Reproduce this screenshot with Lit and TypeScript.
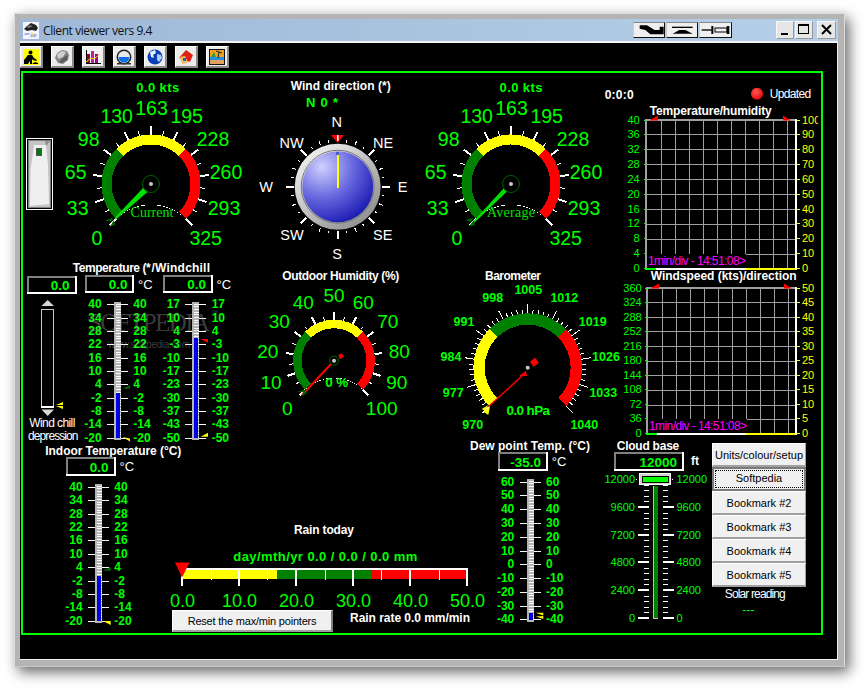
import { LitElement, html, svg, css } from "lit";
import { customElement } from "lit/decorators.js";

const rad = (d: number) => (d * Math.PI) / 180;
const pt = (cx: number, cy: number, r: number, d: number): [number, number] => [
  cx + r * Math.sin(rad(d)),
  cy - r * Math.cos(rad(d)),
];
const band = (cx: number, cy: number, r1: number, r2: number, a: number, b: number) => {
  const [x1, y1] = pt(cx, cy, r2, a);
  const [x2, y2] = pt(cx, cy, r2, b);
  const [x3, y3] = pt(cx, cy, r1, b);
  const [x4, y4] = pt(cx, cy, r1, a);
  return `M${x1} ${y1}A${r2} ${r2} 0 0 1 ${x2} ${y2}L${x3} ${y3}A${r1} ${r1} 0 0 0 ${x4} ${y4}Z`;
};
const T = (
  x: number,
  y: number,
  s: string,
  cls: string,
  anchor = "middle",
  len?: number,
) =>
  len
    ? svg`<text x=${x} y=${y} class=${cls} text-anchor=${anchor} dominant-baseline="central" textLength=${len}>${s}</text>`
    : svg`<text x=${x} y=${y} class=${cls} text-anchor=${anchor} dominant-baseline="central">${s}</text>`;
const tick = (cx: number, cy: number, r1: number, r2: number, d: number, w: number) => {
  const [a, b] = pt(cx, cy, r1, d);
  const [c, e] = pt(cx, cy, r2, d);
  return svg`<line x1=${a} y1=${b} x2=${c} y2=${e} stroke="#fff" stroke-width=${w} />`;
};
const poly = (p: number[][], fill: string) =>
  svg`<polygon points=${p.map((q) => q.join(",")).join(" ")} fill=${fill} />`;

interface GaugeCfg {
  cx: number;
  cy: number;
  rIn: number;
  rOut: number;
  colors: string[];
  majorW: number;
  majorLen: number;
  minors: number;
  minorLen: number;
  border: boolean;
  labels: [string, number, number][];
  cls: string;
}

const gauge = (g: GaugeCfg) => {
  const ticks = [];
  for (let i = 0; i <= 10; i++) {
    const d = -135 + i * 27;
    ticks.push(tick(g.cx, g.cy, g.rOut, g.rOut + g.majorLen, d, g.majorW));
    if (i < 10)
      for (let m = 1; m <= g.minors; m++) {
        const dm = d + (m * 27) / (g.minors + 1);
        ticks.push(tick(g.cx, g.cy, g.rOut, g.rOut + g.minorLen, dm, 1));
      }
  }
  return svg`<g shape-rendering="crispEdges">
    ${ticks}
    ${g.colors.map(
      (c, i) =>
        svg`<path d=${band(g.cx, g.cy, g.rIn, g.rOut, -135 + i * 90, -45 + i * 90)} fill=${c} />`,
    )}
    ${g.border
      ? svg`<path d=${band(g.cx, g.cy, g.rOut, g.rOut + 1.5, -135, 135)} fill="#fff" />`
      : ""}
  </g>
  ${g.labels.map(([s, x, y]) => T(x, y, s, g.cls))}`;
};

const speedLabels = (dx: number): [string, number, number][] => [
  ["0", 97 + dx, 238],
  ["33", 77.7 + dx, 208],
  ["65", 75.7 + dx, 172],
  ["98", 88.7 + dx, 139],
  ["130", 116.7 + dx, 116],
  ["163", 151.5 + dx, 108],
  ["195", 186.7 + dx, 116],
  ["228", 213 + dx, 139],
  ["260", 226 + dx, 172],
  ["293", 224 + dx, 208],
  ["325", 205.7 + dx, 238],
];
const TRI = ["#008000", "#ffff00", "#ff0000"];
const speedGauge = (cx: number) => ({
  cx,
  cy: 184,
  rIn: 39.5,
  rOut: 49.5,
  colors: TRI,
  majorW: 2,
  majorLen: 9,
  minors: 1,
  minorLen: 5,
  border: true,
  labels: speedLabels(cx - 151),
  cls: "big",
});

const hub = (cx: number, cy: number, r: number) => svg`
  <circle cx=${cx} cy=${cy} r=${r} fill="#000" stroke="#006400" stroke-width="1" />
  <circle cx=${cx} cy=${cy} r="2" fill="#c8c8c8" />`;

const compass = () => {
  const cx = 337.7,
    cy = 186.7;
  const ts = [];
  for (let i = 0; i < 32; i++) {
    const d = i * 11.25;
    if (i === 0) continue;
    if (i % 4 === 0) ts.push(tick(cx, cy, 44, 52, d, 2));
    else ts.push(tick(cx, cy, 45, i % 2 ? 47.5 : 49, d, 1));
  }
  const labels: [string, number, number][] = [
    ["N", 336.7, 122],
    ["NE", 383, 143],
    ["E", 402.7, 187],
    ["SE", 382.7, 235],
    ["S", 337, 254],
    ["SW", 292, 235],
    ["W", 266, 187],
    ["NW", 291.7, 143],
  ];
  return svg`
    <g shape-rendering="crispEdges">${ts}</g>
    <circle cx=${cx} cy=${cy} r="43" fill="url(#ring)" />
    <circle cx=${cx} cy=${cy} r="36.5" fill="none" stroke="#777" stroke-width="1" />
    <circle cx=${cx} cy=${cy} r="35.5" fill="url(#sphere)" />
    <rect x="336" y="152" width="3" height="3" fill="#4a5fd0" />
    <rect x="337" y="155" width="2" height="33" fill="#ffff00" />
    ${poly([[331, 135], [344, 135], [337.7, 143]], "#ff0000")}
    <rect x="337" y="135" width="1.6" height="6" fill="#fff" />
    ${labels.map(([s, x, y]) => T(x, y, s, "cmp"))}`;
};

interface ThermCfg {
  x: number;
  top: number;
  bottom: number;
  fillTop: number;
  fillBottom: number;
  firstY: number;
  pitch: number;
  left: string[];
  right: string[];
  leftEnd: number;
  rightStart: number;
}
const therm = (t: ThermCfg) => {
  const hatch = [];
  for (let y = t.top + 2; y < t.bottom - 1; y += 2.67) hatch.push(y);
  return svg`
    <g shape-rendering="crispEdges">
      <rect x=${t.x} y=${t.top} width="7" height=${t.bottom - t.top} fill="#b4b4b4" />
      ${hatch.map(
        (y) =>
          svg`<line x1=${t.x + 2} x2=${t.x + 7} y1=${y} y2=${y} stroke="#fff" stroke-width="1" />`,
      )}
      <rect x=${t.x + 1.5} y=${t.fillTop} width="4.5" height=${t.fillBottom - t.fillTop} fill="#0000e6" />
      ${t.left.map((_, i) => {
        const y = Math.round(t.firstY + i * t.pitch);
        return svg`<line x1=${t.x - 7} x2=${t.x} y1=${y} y2=${y} stroke="#fff" stroke-width="1" />
          <line x1=${t.x + 7} x2=${t.x + 14} y1=${y} y2=${y} stroke="#fff" stroke-width="1" />`;
      })}
    </g>
    ${t.left.map((s, i) => T(t.leftEnd, t.firstY + i * t.pitch, s, "th", "end"))}
    ${t.right.map((s, i) => T(t.rightStart, t.firstY + i * t.pitch, s, "th", "start"))}`;
};

const valueBox = (
  x1: number,
  y1: number,
  x2: number,
  y2: number,
  val: string,
  end: number,
  unit?: [string, number],
) => svg`
  <g shape-rendering="crispEdges" fill="none" stroke-width="2">
    <path d="M${x1 + 1} ${y2}V${y1 + 1}H${x2}" stroke="#808080" />
    <path d="M${x1} ${y2 - 1}H${x2 - 1}V${y1}" stroke="#fff" />
  </g>
  ${T(end, (y1 + y2) / 2 + 0.5, val, "val", "end")}
  ${unit ? T(unit[1], (y1 + y2) / 2, unit[0], "unit", "start") : ""}`;

const chart = (
  x0: number,
  top: number,
  bottom: number,
  rowCount: number,
  left: string[],
  right: string[],
  labelEnd: number,
  rightStart: number,
) => {
  const pitch = (bottom - top) / rowCount;
  const vs = Array.from({ length: 10 }, (_, i) => Math.round(x0 + 2 + (i + 1) * 14));
  const hs = Array.from({ length: rowCount - 1 }, (_, i) => Math.round(top + (i + 1) * pitch));
  const labelPitch = (bottom - top - 1) / (left.length - 1);
  return svg`
    <g shape-rendering="crispEdges">
      ${vs.map((x) => svg`<line x1=${x} x2=${x} y1=${top} y2=${bottom} stroke="#a0a0a0" />`)}
      ${hs.map((y) => svg`<line x1=${x0} x2="796" y1=${y} y2=${y} stroke="#a0a0a0" />`)}
      <rect x=${x0 + 2} y=${bottom - 15} width="99" height="15" fill="#000" />
      <rect x=${x0} y=${top - 1} width="151" height="2" fill="#a0a0a0" />
      <rect x=${x0} y=${top - 1} width="2" height=${bottom - top + 1} fill="#a0a0a0" />
      <rect x="795" y=${top - 1} width="2" height=${bottom - top + 2} fill="#fff" />
      <rect x=${x0} y=${bottom - 1} width="151" height="2" fill="#fff" />
      <rect x=${x0} y=${bottom - 1} width="11" height="2" fill="#00ff00" />
      <rect x="746" y=${bottom - 1} width="49" height="2" fill="#ffff00" />
      ${left.map((_, i) => {
        const y = Math.round(top + i * labelPitch);
        return svg`<rect x=${x0 - 1} y=${y} width="2" height="1" fill="#00ff00" />
          <rect x="797" y=${y} width="3" height="1" fill="#ffff00" />`;
      })}
    </g>
    ${poly([[x0 + 4, top + 1], [x0 + 13, top + 1], [x0 + 13, top - 4]], "#ff0000")}
    ${poly([[x0 + 138, top - 4], [x0 + 138, top + 1], [x0 + 146, top + 1]], "#ff0000")}
    ${T(x0 + 3, bottom - 8.5, "1min/div - 14:51:08>", "mag", "start", 98)}
    ${left.map((s, i) => T(labelEnd, top + i * labelPitch, s, "ax", "end"))}
    ${right.map((s, i) => T(rightStart, top + i * labelPitch, s, "ax yel", "start"))}`;
};

const rainBar = () => {
  const major = [182, 239, 296, 353, 410, 467];
  const minor = [211, 267, 325, 381, 439];
  return svg`
    <g shape-rendering="crispEdges">
      <rect x="183" y="570" width="94" height="9" fill="#ffff00" />
      <rect x="277" y="570" width="95" height="9" fill="#008000" />
      <rect x="372" y="570" width="95" height="9" fill="#ff0000" />
      <rect x="182" y="568" width="286" height="2" fill="#fff" />
      ${major.map((x) => svg`<rect x=${x - 1} y="568" width="2" height="18" fill="#fff" />`)}
      ${minor.map((x) => svg`<rect x=${x} y="568" width="1" height="12" fill="#fff" />`)}
    </g>
    ${poly([[175, 562.5], [189.5, 562.5], [182, 577.5]], "#ff0000")}
    ${["0.0", "10.0", "20.0", "30.0", "40.0", "50.0"].map((s, i) =>
      T(major[i] + 0.5, 600.5, s, "rain"),
    )}`;
};

const cloudScale = () => {
  const majors = [479, 507, 535, 562, 590, 618];
  const labels = ["12000", "9600", "7200", "4800", "2400", "0"];
  const minors: number[] = [];
  for (let i = 0; i < 5; i++)
    for (let m = 1; m < 5; m++) minors.push(Math.round(majors[i] + (m * (majors[i + 1] - majors[i])) / 5));
  minors.push(490);
  return svg`
    <g shape-rendering="crispEdges">
      ${majors.slice(1).map(
        (y) => svg`<rect x="638" y=${y - 1} width="11" height="2" fill="#fff" />
          <rect x="663" y=${y - 1} width="11" height="2" fill="#fff" />`,
      )}
      ${minors.map(
        (y) => svg`<rect x="644" y=${y} width="5" height="1" fill="#fff" />
          <rect x="663" y=${y} width="5" height="1" fill="#fff" />`,
      )}
      <rect x="636" y="479" width="1" height="1" fill="#fff" />
      <rect x="672" y="479" width="1" height="1" fill="#fff" />
      <rect x="653" y="486" width="5" height="133" fill="#c0c0c0" />
      <rect x="654" y="486" width="3.5" height="132" fill="#008000" />
      <rect x="639.5" y="473.5" width="31" height="11" fill="#d0d0d0" stroke="#fff" />
      <rect x="642" y="476" width="26" height="6.5" fill="#00ff00" stroke="#000" />
    </g>
    ${labels.map((s, i) => T(635, majors[i], s, "ax", "end"))}
    ${labels.map((s, i) => T(676.5, majors[i], s, "ax", "start"))}`;
};

const panel = () => svg`
  <svg class="canvas" width="818" height="589" viewBox="20 71 818 589" xmlns="http://www.w3.org/2000/svg">
    <defs>
      <radialGradient id="sphere" cx="0.28" cy="0.22" r="0.95">
        <stop offset="0" stop-color="#d0d0ff" />
        <stop offset="0.45" stop-color="#6a6ae0" />
        <stop offset="1" stop-color="#0808a8" />
      </radialGradient>
      <linearGradient id="ring" x1="0.15" y1="0.1" x2="0.85" y2="0.9">
        <stop offset="0" stop-color="#eeeeee" />
        <stop offset="1" stop-color="#909090" />
      </linearGradient>
      <radialGradient id="led" cx="0.4" cy="0.35" r="0.7">
        <stop offset="0" stop-color="#ff5a5a" />
        <stop offset="1" stop-color="#e00000" />
      </radialGradient>
      <clipPath id="clip1"><rect x="620" y="110" width="198" height="170" /></clipPath>
    </defs>
    <rect x="22" y="72" width="800" height="562" fill="none" stroke="#00ff00" stroke-width="2" shape-rendering="crispEdges" />

    ${T(157.7, 87, "0.0 kts", "gb", "middle", 43)}
    ${gauge(speedGauge(151))}
    ${poly([[143.5, 187.5], [148, 191.5], [116, 219.5], [114.5, 218]], "#00e000")}
    ${poly([[105, 221], [113, 217.5], [112, 221]], "#006400")}
    ${poly([[110, 226.5], [114, 220], [115, 225]], "#006400")}
    ${hub(151, 184, 8.5)}
    ${T(152, 212, "Current", "ser", "middle", 43)}

    <g shape-rendering="crispEdges">
      <rect x="26.5" y="138.5" width="26" height="71" fill="none" stroke="#fff" />
      <rect x="28" y="140" width="23" height="68" fill="#808080" />
      <rect x="29" y="141" width="21" height="66" fill="#c4c4c4" />
    </g>
    ${poly([[34, 145], [46, 145], [48, 165], [49, 204], [30, 206], [30.5, 170]], "#efefef")}
    ${poly([[45, 141], [50, 141], [46, 146]], "#8c8c8c")}
    <rect x="36" y="147.5" width="6" height="8" fill="#555" shape-rendering="crispEdges" />
    <rect x="37" y="149" width="4" height="6" fill="#007a00" shape-rendering="crispEdges" />

    ${T(340.7, 86, "Wind direction (*)", "hd", "middle", 100)}
    ${T(322, 102, "N 0 *", "gb", "middle", 32)}
    ${compass()}

    ${T(521, 87, "0.0 kts", "gb", "middle", 43)}
    ${gauge(speedGauge(511))}
    ${poly([[504, 188], [507, 191.5], [471, 226], [470, 225]], "#00e000")}
    ${poly([[465, 220], [473, 218], [471, 222]], "#006400")}
    ${poly([[469, 226.5], [474, 220], [475, 225]], "#006400")}
    ${hub(511, 184, 8.5)}
    ${T(511, 212, "Average", "ser", "middle", 48)}

    ${T(604.7, 95, "0:0:0", "hd", "start", 29)}
    <circle cx="757" cy="93.7" r="6" fill="url(#led)" />
    ${T(769.7, 94, "Updated", "thin", "start", 41.5)}

    ${T(649.7, 111, "Temperature/humidity", "hd", "start", 122)}
    <g clip-path="url(#clip1)">
      ${chart(645, 119.5, 269, 10,
        ["40", "36", "32", "28", "24", "20", "16", "12", "8", "4", "0"],
        ["100", "90", "80", "70", "60", "50", "40", "30", "20", "10", "0"],
        639.7, 802)}
    </g>
    ${T(650.7, 276, "Windspeed (kts)/direction", "hd", "start", 146)}
    ${chart(646, 287.5, 434, 10,
      ["360", "324", "288", "252", "216", "180", "144", "108", "72", "36", "0"],
      ["50", "45", "40", "35", "30", "25", "20", "15", "10", "5", "0"],
      641.7, 802)}

    ${T(72.7, 267.7, "Temperature (*", "hd", "start", 78)}
    ${T(151.5, 267.7, "/Windchill", "hd", "start", 58.5)}
    ${valueBox(27, 276, 77, 294, "0.0", 69.5)}
    ${valueBox(85, 275, 134, 293, "0.0", 127.5, ["°C", 138])}
    ${valueBox(163, 275, 213, 293, "0.0", 206, ["°C", 216.5])}

    <g shape-rendering="crispEdges">
      <rect x="41.5" y="309.5" width="12" height="97" fill="none" stroke="#c8c8c8" />
      <rect x="41" y="405.5" width="13" height="2" fill="#fff" />
    </g>
    ${poly([[41.5, 306], [54, 306], [47.7, 300]], "#d8d8d8")}
    ${poly([[41.5, 409.5], [54, 409.5], [47.7, 416]], "#d8d8d8")}
    ${poly([[56, 405], [63, 402], [63, 405]], "#ffff00")}
    ${poly([[56, 406], [63, 406], [63, 409]], "#ffff00")}
    ${T(52.3, 423, "Wind chill", "thin", "middle", 46)}
    ${T(53.3, 436, "depression", "thin", "middle", 50.5)}

    ${therm({
      x: 114, top: 302, bottom: 440, fillTop: 393, fillBottom: 438, firstY: 304.3, pitch: 13.35,
      left: ["40", "34", "28", "22", "16", "10", "4", "-2", "-8", "-14", "-20"],
      right: ["40", "34", "28", "22", "16", "10", "4", "-2", "-8", "-14", "-20"],
      leftEnd: 101.7, rightStart: 133.3,
    })}
    ${poly([[122.5, 388.7], [130, 388.7], [130, 385]], "#006400")}
    ${poly([[122.5, 437], [130, 438.5], [130, 441.5]], "#ffff00")}

    ${therm({
      x: 192, top: 302, bottom: 440, fillTop: 338, fillBottom: 438, firstY: 304.3, pitch: 13.35,
      left: ["17", "10", "4", "-3", "-10", "-17", "-23", "-30", "-37", "-43", "-50"],
      right: ["17", "10", "4", "-3", "-10", "-17", "-23", "-30", "-37", "-43", "-50"],
      leftEnd: 180, rightStart: 211.7,
    })}
    ${poly([[200.5, 339], [208, 339], [208, 342.7]], "#ff0000")}
    ${poly([[200.5, 436.7], [208, 436.7], [208, 432.7]], "#ffff00")}

    ${T(113.3, 451, "Indoor Temperature (°C)", "hd", "middle", 136)}
    ${valueBox(66, 457, 116, 476, "0.0", 108.5, ["°C", 119.5])}
    ${therm({
      x: 95, top: 484, bottom: 623, fillTop: 576, fillBottom: 621, firstY: 486.7, pitch: 13.4,
      left: ["40", "34", "28", "22", "16", "10", "4", "-2", "-8", "-14", "-20"],
      right: ["40", "34", "28", "22", "16", "10", "4", "-2", "-8", "-14", "-20"],
      leftEnd: 82.7, rightStart: 114.3,
    })}
    ${poly([[103, 570.7], [110.7, 570.7], [110.7, 566.7]], "#006400")}
    ${poly([[103, 621], [110.7, 621], [110.7, 625]], "#ffff00")}

    ${T(340.7, 276, "Outdoor Humidity (%)", "hd", "middle", 117)}
    ${gauge({
      cx: 334, cy: 360.7, rIn: 32.5, rOut: 41, colors: TRI, majorW: 2, majorLen: 8,
      minors: 1, minorLen: 4, border: true, cls: "mid",
      labels: [
        ["0", 287.3, 408.3], ["10", 271, 382.3], ["20", 267.7, 351], ["30", 279.3, 321.7],
        ["40", 303.3, 302.3], ["50", 334, 295], ["60", 363.3, 302.3], ["70", 387.7, 321.7],
        ["80", 399.3, 351], ["90", 396.7, 382.3], ["100", 381.7, 408.3],
      ],
    })}
    <line x1="331" y1="364" x2="302" y2="395" stroke="#ff0000" stroke-width="2" />
    ${poly([[297, 392], [307, 389], [305, 392]], "#006400")}
    ${poly([[301, 397], [304, 391], [307, 393]], "#006400")}
    ${poly([[338.3, 355], [341.7, 353.3], [344, 356.7], [340, 359.3]], "#ff0000")}
    ${hub(334, 360.7, 4.5)}
    ${T(336.7, 382.3, "0 %", "val", "middle", 23)}

    ${T(513, 276, "Barometer", "hd", "middle", 56)}
    ${gauge({
      cx: 527.7, cy: 367.7, rIn: 43, rOut: 54.3, colors: ["#ffff00", "#008000", "#ff0000"],
      majorW: 1, majorLen: 9.5, minors: 4, minorLen: 4, border: false, cls: "baro",
      labels: [
        ["970", 472.7, 424.7], ["977", 453.3, 392.7], ["984", 451, 356.7], ["991", 464, 321.7],
        ["998", 492.7, 297.7], ["1005", 528.3, 290], ["1012", 564.3, 297.7], ["1019", 592.7, 321.7],
        ["1026", 606, 356.7], ["1033", 603.3, 392.7], ["1040", 584.3, 424.7],
      ],
    })}
    <line x1="525" y1="373.3" x2="488.3" y2="406.7" stroke="#ff0000" stroke-width="1.5" />
    ${poly([[519, 376], [526, 371], [527, 376]], "#ff0000")}
    ${poly([[530, 361.7], [535, 357.7], [539, 362.7], [533.3, 366.7]], "#ff0000")}
    ${poly([[481.7, 409], [488.3, 405], [485, 410.7]], "#ffff00")}
    ${poly([[483.3, 411.7], [490, 406.7], [488.3, 415]], "#ffff00")}
    <circle cx="527.7" cy="367.7" r="2" fill="#c8c8c8" />
    ${T(528.3, 410.7, "0.0 hPa", "val", "middle", 43.5)}

    ${T(530, 446, "Dew point Temp. (°C)", "hd", "middle", 120)}
    ${valueBox(498, 452, 548, 471, "-35.0", 541, ["°C", 551.7])}
    ${therm({
      x: 527, top: 479, bottom: 622, fillTop: 613, fillBottom: 620, firstY: 481.7, pitch: 13.77,
      left: ["60", "50", "40", "30", "20", "10", "0", "-10", "-20", "-30", "-40"],
      right: ["60", "50", "40", "30", "20", "10", "0", "-10", "-20", "-30", "-40"],
      leftEnd: 514.3, rightStart: 546,
    })}
    ${poly([[535.7, 612.7], [543.3, 612.7], [543.3, 615.5]], "#ffff00")}
    ${poly([[535.7, 616.5], [543.3, 616], [543.3, 619]], "#ffff00")}

    ${T(648, 446, "Cloud base", "hd", "middle", 62.5)}
    ${valueBox(614, 452, 684, 471, "12000", 677)}
    ${T(691, 461, "ft", "hd", "start")}
    ${cloudScale()}

    ${T(755.3, 594.3, "Solar reading", "thin", "middle", 61)}
    ${T(748.3, 610, "---", "thin grn", "middle", 12)}

    ${T(324, 530, "Rain today", "hd", "middle", 60)}
    ${T(325.3, 556.7, "day/mth/yr 0.0 / 0.0 / 0.0 mm", "gb", "middle", 184)}
    ${rainBar()}
    ${T(410, 618, "Rain rate 0.0 mm/min", "hd", "middle", 120)}

    <text x="88" y="331" class="wm" textLength="122">SOFTPEDIA</text>
    <text x="211" y="315" class="wm3">™</text>
    <text x="108" y="348" class="wm2" textLength="82">www.softpedia.com</text>
  </svg>`;

const toolIcons = [
  svg`<rect width="16" height="16" fill="#ffff00" />
    <circle cx="7.5" cy="3.5" r="2" fill="#000" />
    <path d="M1 15V11L5 6h4l2 3 3 2-1 1-3-1-1-1v5H7v-3l-2 3z" fill="#000" />
    <path d="M9 15l3-2 3 1v1z" fill="#000" />`,
  svg`<path d="M1 9l2-5 5-3 5 1 2 4-1 5-5 4-5-1z" fill="#858585" />
    <path d="M3 5l5-3 4 1-3 5-5 2z" fill="#cfcfcf" />
    <path d="M10 8l4-2-1 5-5 3-3-1z" fill="#5c5c5c" />`,
  svg`<rect width="16" height="16" fill="#f2f2f2" />
    <rect x="2" y="5" width="3" height="10" fill="#900030" />
    <rect x="6" y="2" width="3" height="13" fill="#c020a0" />
    <rect x="10" y="5" width="3" height="10" fill="#a00090" />
    <rect x="1" y="1" width="1" height="14" fill="#000" />
    <rect x="1" y="14" width="15" height="1" fill="#000" />
    <path d="M1 13l5-4 3 1 6-5" fill="none" stroke="#ffe000" stroke-width="1" />`,
  svg`<circle cx="8" cy="8" r="7.5" fill="#222" />
    <circle cx="8" cy="8" r="6" fill="#e8e8e8" />
    <path d="M2.5 8h11a5.5 5.5 0 0 1-11 0z" fill="#0a70f0" />
    <rect x="1" y="14" width="14" height="1.5" fill="#333" />`,
  svg`<circle cx="8" cy="8" r="7.5" fill="#0b3fb8" />
    <path d="M3 3 8 1l1 3-3 2 1 3-3-1z" fill="#e8f0ff" />
    <path d="M10 5l4 1 1 3-3 4-2-2z" fill="#b0ccff" />`,
  svg`<path d="M1 9l7-8 7 5-3 7z" fill="#e02010" />
    <path d="M2 8l5-1 3 7-6 1z" fill="#f0c060" />
    <rect x="5" y="9" width="3" height="3" fill="#2060d0" />`,
  svg`<rect width="16" height="16" fill="#111" />
    <rect x="1" y="1" width="14" height="7" fill="#f0a020" />
    <path d="M5 3l2 5H2z" fill="#30a030" />
    <rect x="1" y="8" width="14" height="3" fill="#2090e0" />
    <rect x="1" y="11" width="14" height="4" fill="#e0a060" />
    <path d="M9 9l1-6M10 3l3 1M10 3 7 2" stroke="#222" stroke-width="1" fill="none" />`,
];

@customElement("app-root")
export class AppRoot extends LitElement {
  static styles = css`
    :host {
      display: block;
      width: 866px;
      height: 688px;
      background: #fff;
      overflow: hidden;
      padding: 13px 0 0 14px;
      box-sizing: border-box;
    }
    .window {
      width: 831px;
      height: 654px;
      box-sizing: border-box;
      background: #b4b4b4;
      border: 1px solid #dcdcdc;
      border-bottom-color: #c8c8c8;
      padding: 5px 6px 6px 5px;
      display: flex;
      flex-direction: column;
      box-shadow: 4px 5px 13px rgba(0, 0, 0, 0.6);
    }
    .title {
      height: 22px;
      flex: none;
      background: linear-gradient(90deg, #9eb8d6, #b6cfe9);
      display: flex;
      align-items: center;
      border-bottom: 2px solid #f2f2f2;
      box-sizing: content-box;
    }
    .app-icon {
      margin: 0 4px 0 3px;
      flex: none;
    }
    .title-text {
      font: 12px "Open Sans", "Liberation Sans", sans-serif;
      letter-spacing: -0.42px;
      color: #111;
      flex: 1;
    }
    .tbtns {
      display: flex;
      gap: 1px;
      margin-right: 44px;
    }
    .tbtn {
      width: 32px;
      height: 16px;
      background: #efefef;
      border-top: 1px solid #888;
      border-left: 1px solid #ccc;
      border-right: 1px solid #111;
      border-bottom: 1px solid #111;
      display: block;
      padding: 0;
    }
    .tbtn:last-child {
      width: 33px;
    }
    .wbtns {
      display: flex;
      gap: 1px;
      margin-right: 2px;
    }
    .wbtn {
      width: 18px;
      height: 18px;
      box-sizing: border-box;
      background: #e6e6e6;
      border: 1px solid #f8f8f8;
      border-right-color: #999;
      border-bottom-color: #999;
      padding: 0;
      display: block;
    }
    .wbtn.close {
      width: 19px;
      margin-left: 3px;
    }
    .body {
      flex: 1;
      background: #000;
      border-right: 1px solid #f0f0f0;
      border-bottom: 1px solid #f0f0f0;
      display: flex;
      flex-direction: column;
      min-height: 0;
    }
    .toolbar {
      height: 28px;
      flex: none;
      display: flex;
      gap: 8px;
      padding-top: 3px;
      box-sizing: border-box;
    }
    .tool {
      width: 23px;
      height: 22px;
      box-sizing: border-box;
      background: #ececec;
      border: 1px solid #fff;
      border-right: 2px solid #8a8a8a;
      border-bottom: 2px solid #8a8a8a;
      padding: 2px;
      display: block;
    }
    .tool svg {
      display: block;
    }
    .stage {
      position: relative;
      flex: 1;
      min-height: 0;
    }
    .canvas {
      display: block;
    }
    .stack {
      position: absolute;
      left: 692px;
      top: 372px;
      width: 94px;
      display: flex;
      flex-direction: column;
    }
    .stack button,
    .reset {
      font: 11px "Liberation Sans", sans-serif;
      color: #000;
      background: #f0f0f0;
      border: 1px solid #fff;
      border-right-color: #a0a0a0;
      border-bottom: 2px solid #a0a0a0;
      padding: 0;
      height: 24px;
      box-sizing: border-box;
    }
    .stack button.units {
      white-space: nowrap;
    }
    .stack button.focus {
      border: 2px solid #7a7a7a;
      padding: 1px;
      height: 24px;
    }
    .focus span {
      display: block;
      height: 100%;
      line-height: 15px;
      border: 1px dotted #000;
      box-sizing: border-box;
    }
    .reset {
      position: absolute;
      left: 152px;
      top: 539px;
      width: 161px;
      height: 22px;
      border-right: 2px solid #808080;
      letter-spacing: -0.2px;
    }
    text {
      font-family: "Liberation Sans", Arial, sans-serif;
    }
    .big {
      font-size: 19.5px;
      fill: #00ff00;
    }
    .mid {
      font-size: 19px;
      fill: #00ff00;
    }
    .rain {
      font-size: 18px;
      fill: #00ff00;
    }
    .th {
      font-size: 12px;
      font-weight: 700;
      fill: #00ff00;
    }
    .baro {
      font-size: 12.5px;
      font-weight: 700;
      fill: #00ff00;
    }
    .ax {
      font-size: 11px;
      fill: #00ff00;
    }
    .yel {
      fill: #ffff00;
    }
    .hd {
      font-size: 12px;
      font-weight: 700;
      fill: #fff;
    }
    .gb {
      font-size: 13px;
      font-weight: 700;
      fill: #00ff00;
    }
    .val {
      font-size: 13.5px;
      font-weight: 700;
      fill: #00ff00;
    }
    .unit {
      font-size: 13px;
      fill: #fff;
    }
    .cmp {
      font-size: 14.5px;
      fill: #fff;
    }
    .thin {
      font-size: 12px;
      fill: #fff;
    }
    .grn {
      fill: #00ff00;
    }
    .ser {
      font-family: "Liberation Serif", serif;
      font-size: 14px;
      fill: #00e000;
    }
    .mag {
      font-size: 12px;
      fill: #ff00ff;
    }
    .wm {
      font-family: "Liberation Serif", serif;
      font-size: 25px;
      fill: rgba(170, 170, 170, 0.36);
    }
    .wm2 {
      font-size: 10px;
      fill: rgba(170, 170, 170, 0.36);
    }
    .wm3 {
      font-size: 7px;
      fill: rgba(170, 170, 170, 0.36);
    }
  `;

  render() {
    return html`
      <div class="window">
        <div class="title">
          <svg class="app-icon" width="16" height="17" viewBox="0 0 16 17">
            <rect width="16" height="17" fill="#f4f4ff" />
            <path d="M1 7l3-3 4-3 5 2 2 3-2 3-4-1-5 1z" fill="#222" />
            <path d="M3 5l4-2 3 1-4 2z" fill="#777" />
            <path d="M2 11h5l-1 2H1zM8 12h6l-1 3H7z" fill="#aab4ee" />
            <path d="M8 10l1 4-1 2 3-4z" fill="#e8e060" />
          </svg>
          <span class="title-text">Client viewer vers 9.4</span>
          <div class="tbtns">
            <button class="tbtn" aria-label="Shrink">
              <svg width="30" height="14" viewBox="3 3 90 42">
                <polygon points="20,10 42,10 65,24 80,24 80,14 92,14 92,37 52,37 37,24 20,20" fill="#000" />
              </svg>
            </button>
            <button class="tbtn" aria-label="Flatten">
              <svg width="30" height="14" viewBox="3 3 90 42">
                <rect x="18" y="14" width="62" height="4" fill="#000" />
                <polygon points="40,24 58,24 80,35 20,35" fill="#000" />
              </svg>
            </button>
            <button class="tbtn" aria-label="Pin">
              <svg width="30" height="14" viewBox="3 3 90 42">
                <rect x="5" y="22" width="30" height="4" fill="#000" />
                <rect x="34" y="12" width="6" height="24" fill="#000" />
                <rect x="45" y="18" width="36" height="12" fill="none" stroke="#000" stroke-width="3" />
                <rect x="80" y="12" width="8" height="24" fill="#000" />
              </svg>
            </button>
          </div>
          <div class="wbtns">
            <button class="wbtn" aria-label="Minimize">
              <svg width="16" height="16" viewBox="0 0 16 16"><rect x="4" y="11" width="7" height="2" fill="#000" /></svg>
            </button>
            <button class="wbtn" aria-label="Maximize">
              <svg width="16" height="16" viewBox="0 0 16 16">
                <rect x="2.5" y="2.5" width="10" height="9" fill="none" stroke="#000" />
                <rect x="2" y="2" width="11" height="2" fill="#000" />
              </svg>
            </button>
            <button class="wbtn close" aria-label="Close">
              <svg width="17" height="16" viewBox="0 0 17 16">
                <path d="M4 3l9 9M13 3l-9 9" stroke="#000" stroke-width="2" fill="none" />
              </svg>
            </button>
          </div>
        </div>
        <div class="body">
          <div class="toolbar">
            ${toolIcons.map(
              (i) => html`<button class="tool">
                <svg width="16" height="16" viewBox="0 0 16 16">${i}</svg>
              </button>`,
            )}
          </div>
          <div class="stage">
            ${panel()}
            <div class="stack">
              <button class="units">Units/colour/setup</button>
              <button class="focus"><span>Softpedia</span></button>
              <button>Bookmark #2</button>
              <button>Bookmark #3</button>
              <button>Bookmark #4</button>
              <button>Bookmark #5</button>
            </div>
            <button class="reset">Reset the max/min pointers</button>
          </div>
        </div>
      </div>
    `;
  }
}
